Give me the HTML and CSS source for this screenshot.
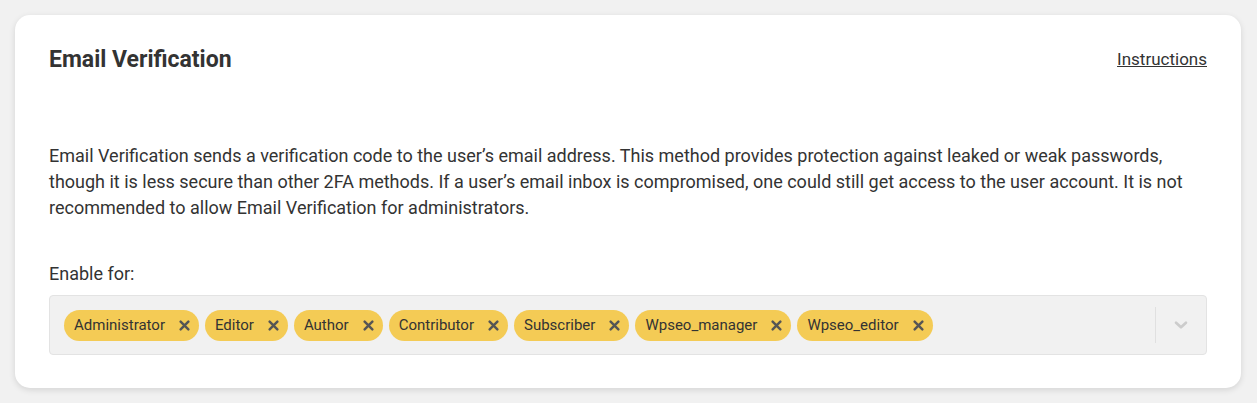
FILE: index.html
```html
<!DOCTYPE html>
<html lang="en">
<head>
    <meta charset="UTF-8">
    <meta name="viewport" content="width=device-width, initial-scale=1.0">
    <title>Email Verification</title>
    <link rel="stylesheet" href="styles.css">
</head>
<body>
    <div class="card">
        <div class="card-header">
            <h2>Email Verification</h2>
            <a href="#" class="instructions">Instructions</a>
        </div>
        <p class="description">Email Verification sends a verification code to the user’s email address. This method provides protection against leaked or weak passwords, though it is less secure than other 2FA methods. If a user’s email inbox is compromised, one could still get access to the user account. It is not recommended to allow Email Verification for administrators.</p>
        <label class="field-label">Enable for:</label>
        <div class="select">
            <div class="tags" id="tag-list"></div>
            <div class="indicator">
                <svg width="18" height="18" viewBox="0 0 20 20"><path d="M4.5 7.5 L10 12.5 L15.5 7.5" fill="none" stroke="#cccccc" stroke-width="3" stroke-linecap="round" stroke-linejoin="round"/></svg>
            </div>
        </div>
    </div>
    <script>
        const roles = ["Administrator", "Editor", "Author", "Contributor", "Subscriber", "Wpseo_manager", "Wpseo_editor"];
        const list = document.getElementById("tag-list");
        roles.forEach(role => {
            let tag = document.createElement("span");
            tag.classList.add("tag");
            tag.innerHTML = `
                <span class="tag-label">${role}</span>
                <span class="tag-remove"><svg width="11" height="11" viewBox="0 0 10 10"><path d="M1.5 1.5 L8.5 8.5 M8.5 1.5 L1.5 8.5" stroke="#555" stroke-width="2.2" stroke-linecap="round"/></svg></span>
            `;
            list.appendChild(tag);
        });
    </script>
</body>
</html>
```

FILE: styles.css
```css
body {
    font-family: Roboto, "Liberation Sans", sans-serif;
    margin: 0;
    padding: 15px;
    background: #f1f1f1;
    color: #333;
}
.card {
    background: white;
    border-radius: 15px;
    padding: 30px 34px 33px 34px;
    box-shadow: 0 2px 6px rgba(0, 0, 0, 0.12);
    width: 1158px;
}
.card-header {
    display: flex;
    justify-content: space-between;
    align-items: center;
    height: 28px;
}
.card-header h2 {
    margin: 0;
    font-size: 23px;
    font-weight: 700;
    color: #333;
}
.instructions {
    color: #333;
    font-size: 17px;
    text-decoration: underline;
}
.description {
    font-size: 18px;
    line-height: 26px;
    margin: 70px 0 0 0;
}
.field-label {
    display: block;
    font-size: 18px;
    line-height: 26px;
    margin-top: 40px;
}
.select {
    display: flex;
    align-items: center;
    margin-top: 8px;
    height: 58px;
    background: #f1f1f1;
    border: 1px solid #e3e3e3;
    border-radius: 4px;
}
.tags {
    flex: 1;
    display: flex;
    gap: 6px;
    padding-left: 14px;
}
.tag {
    display: inline-flex;
    align-items: center;
    height: 31px;
    padding: 0 9px 0 10px;
    gap: 14px;
    background: #f4cb55;
    border-radius: 16px;
    font-size: 15px;
    color: #333;
}
.tag-remove {
    display: flex;
    align-items: center;
}
.indicator {
    display: flex;
    align-items: center;
    justify-content: center;
    width: 50px;
    height: 36px;
    border-left: 1px solid #e0e0e0;
}
```
